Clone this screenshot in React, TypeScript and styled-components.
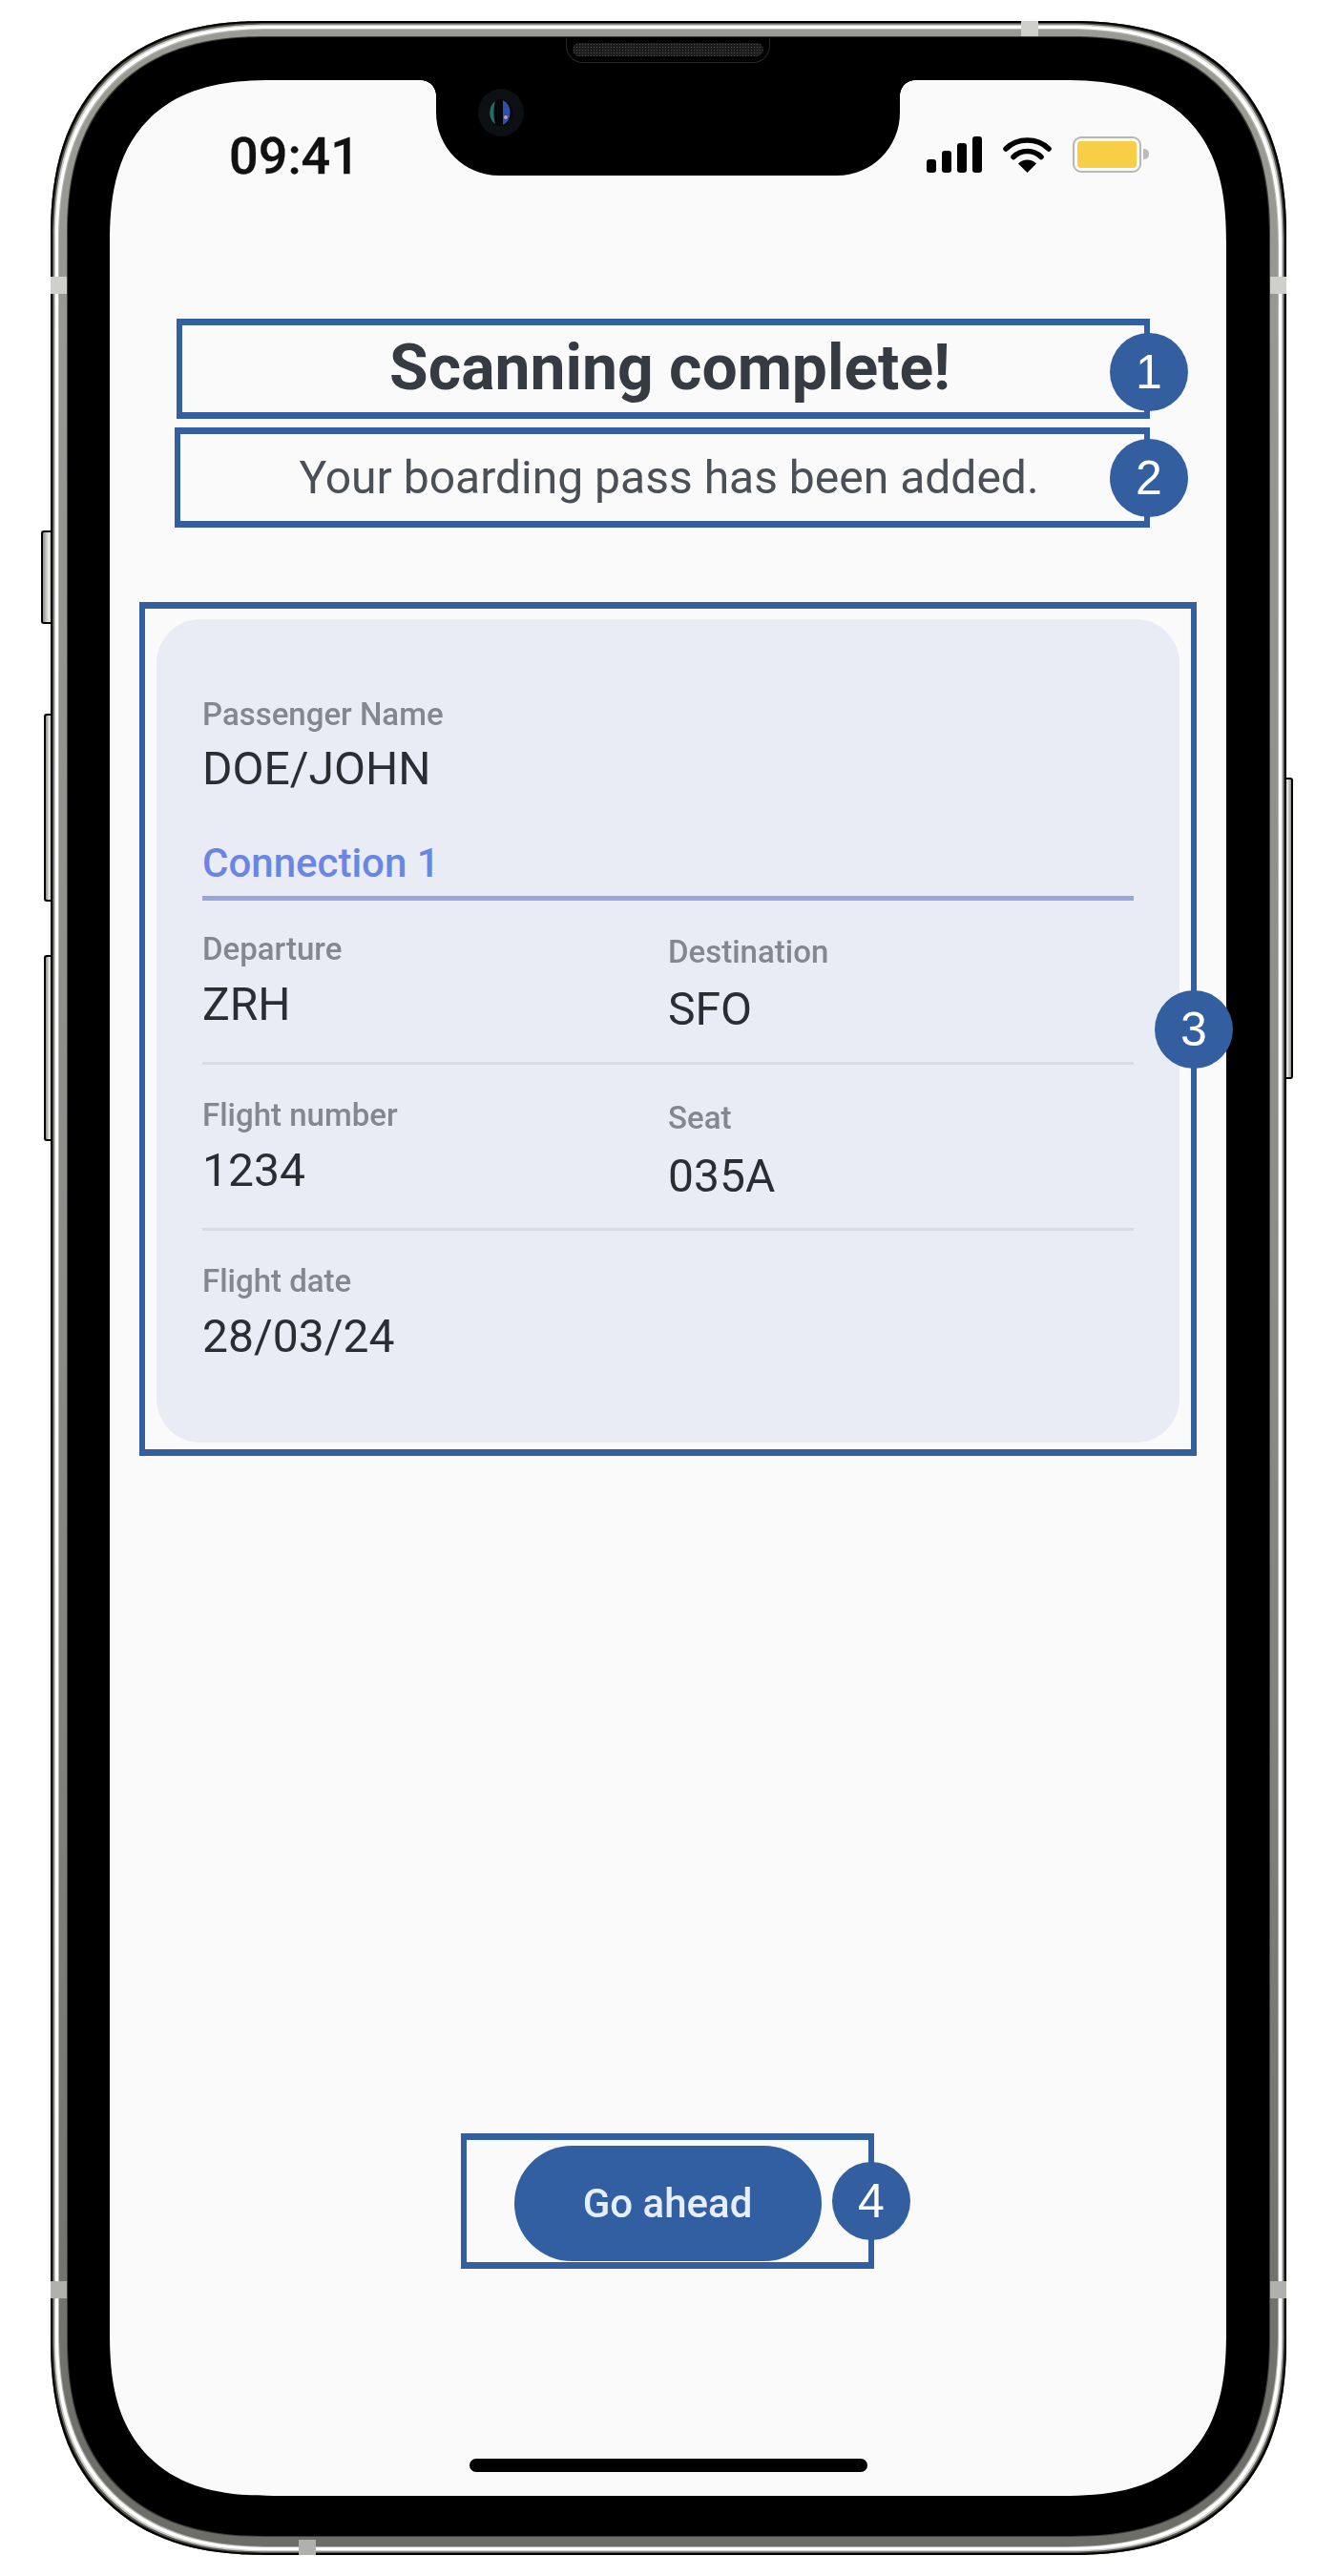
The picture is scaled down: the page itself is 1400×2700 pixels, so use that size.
import React from 'react';
import styled, { createGlobalStyle } from 'styled-components';

const GlobalStyle = createGlobalStyle`
  html, body {
    margin: 0;
    background: #fff;
    font-family: Roboto, "Liberation Sans", sans-serif;
  }
`;

const BLUE = '#335fa1';

const Page = styled.div`
  width: 1400px;
  height: 2700px;
  box-sizing: border-box;
  padding: 22px 0 0 53px;
  overflow: hidden;
`;

const Phone = styled.div`
  position: relative;
  width: 1295px;
  height: 2656px;
`;

const Shell = styled.div`
  position: relative;
  width: 100%;
  height: 100%;
  box-sizing: border-box;
  padding: 17px 18px 20px;
  border-radius: 226px;
  corner-shape: superellipse(1.25);
  background: linear-gradient(180deg, #9a9b93 0%, #8b8c85 50%, #6c6d67 100%);
  box-shadow:
    inset 0 0 0 2px #000,
    inset 0 0 0 3.5px #55554f,
    inset 0 0 0 5px #c9c9c4,
    inset 0 0 0 8px #fff,
    inset 0 0 0 9px #b5b6b0;
`;

const Bezel = styled.div`
  position: relative;
  width: 100%;
  height: 100%;
  box-sizing: border-box;
  padding: 45px 45px 42px 44px;
  border-radius: 208px;
  corner-shape: superellipse(1.25);
  background: #000;
  box-shadow: 0 0 0 1px #3c3c3a;
`;

const SideButton = styled.div<{ $side: 'left' | 'right'; $top: number; $height: number; $width: number }>`
  position: absolute;
  top: ${(p) => p.$top}px;
  ${(p) => (p.$side === 'left' ? `left: ${-p.$width + 1}px;` : `right: ${-p.$width + 1}px;`)}
  width: ${(p) => p.$width}px;
  height: ${(p) => p.$height}px;
  box-sizing: border-box;
  border: 2px solid #000;
  ${(p) => (p.$side === 'left' ? 'border-right: none; border-radius: 3px 0 0 3px;' : 'border-left: none; border-radius: 0 3px 3px 0;')}
  background: linear-gradient(${(p) => (p.$side === 'left' ? '90deg' : '270deg')}, #8f908a 0%, #e4e4e0 60%, #d2d3ce 100%);
`;

const AntennaBand = styled.div<{ $x: number; $y: number; $w: number; $h: number; $dark?: boolean }>`
  position: absolute;
  left: ${(p) => p.$x}px;
  top: ${(p) => p.$y}px;
  width: ${(p) => p.$w}px;
  height: ${(p) => p.$h}px;
  background: ${(p) => (p.$dark ? '#b0b1ac' : '#cfd0cb')};
`;

const Speaker = styled.div`
  position: absolute;
  left: 540px;
  top: 18px;
  width: 214px;
  height: 26px;
  box-sizing: border-box;
  padding: 5px 6px 6px;
  border: 1px solid #26262a;
  border-top: none;
  border-radius: 0 0 18px 18px;
`;

const SpeakerMesh = styled.div`
  height: 100%;
  border-radius: 8px;
  background-color: #1d1d1d;
  background-image: radial-gradient(#4a4a4a 0.8px, transparent 1px);
  background-size: 3px 3px;
`;

const Screen = styled.div`
  position: relative;
  width: 1170px;
  height: 2532px;
  box-sizing: border-box;
  padding-top: 59px;
  border-radius: 172px;
  corner-shape: superellipse(1.35);
  background: #fafafa;
`;

const Notch = styled.div`
  position: absolute;
  left: 342px;
  top: 0;
  width: 486px;
  height: 100px;
  background: #000;
  border-radius: 0 0 66px 66px;

  &::before,
  &::after {
    content: '';
    position: absolute;
    top: 0;
    width: 16px;
    height: 16px;
  }

  &::before {
    left: -16px;
    background: radial-gradient(circle at 0 100%, transparent 15.5px, #000 16px);
  }

  &::after {
    right: -16px;
    background: radial-gradient(circle at 100% 100%, transparent 15.5px, #000 16px);
  }
`;

const CameraIcon = styled.svg`
  position: absolute;
  left: 44px;
  top: 9px;
  width: 48px;
  height: 50px;
`;

const StatusBar = styled.div`
  display: flex;
  align-items: center;
  justify-content: space-between;
  height: 38px;
  padding: 0 89px 0 125px;
  filter: blur(0.7px);
`;

const Time = styled.span`
  font-size: 54px;
  font-weight: 500;
  line-height: 38px;
  color: #111;
  -webkit-text-stroke: 0.3px #111;
  transform: translateY(2px);
`;

const StatusIcons = styled.div`
  display: flex;
  align-items: center;
  gap: 22px;
`;

const SignalBars = styled.div`
  display: flex;
  align-items: flex-end;
  gap: 6px;
  height: 38px;
`;

const SignalBar = styled.div<{ $height: number }>`
  width: 10px;
  height: ${(p) => p.$height}px;
  border-radius: 3px;
  background: #000;
`;

const WifiIcon = styled.svg`
  width: 51px;
  height: 38px;
`;

const Battery = styled.div`
  position: relative;
  width: 72px;
  height: 38px;
  box-sizing: border-box;
  border: 2.5px solid #b8b8b3;
  border-radius: 9px;
  padding: 3px;

  &::after {
    content: '';
    position: absolute;
    right: -10px;
    top: 11px;
    width: 6px;
    height: 11px;
    border-radius: 0 5px 5px 0;
    background: #bcbcb8;
  }
`;

const BatteryLevel = styled.div`
  width: 100%;
  height: 100%;
  border-radius: 4px;
  background: #f7ce46;
`;

const Content = styled.div`
  display: flex;
  flex-direction: column;
  align-items: flex-start;
`;

const Highlight = styled.div<{ $left: number; $top: number; $width: number; $height: number }>`
  position: relative;
  display: flex;
  align-items: center;
  justify-content: center;
  box-sizing: border-box;
  margin: ${(p) => p.$top}px 0 0 ${(p) => p.$left}px;
  width: ${(p) => p.$width}px;
  height: ${(p) => p.$height}px;
  border-style: solid;
  border-color: ${BLUE};
  border-width: 7px 6px;
`;

const Badge = styled.div<{ $right: number; $shift?: number }>`
  position: absolute;
  top: calc(50% - 41px + ${(p) => p.$shift || 0}px);
  right: ${(p) => p.$right}px;
  width: 82px;
  height: 82px;
  border-radius: 50%;
  display: flex;
  align-items: center;
  justify-content: center;
  background: ${BLUE};
  color: #fff;
  font-family: "Liberation Sans", Arial, sans-serif;
  font-size: 50px;
`;

const Title = styled.h1`
  margin: 0 0 3px;
  padding-left: 14px;
  font-size: 66px;
  font-weight: 700;
  color: #363b43;
  filter: blur(0.7px);
`;

const Subtitle = styled.p`
  margin: 0;
  padding-left: 14px;
  font-size: 48px;
  font-weight: 400;
  color: #4b4f56;
  filter: blur(0.7px);
`;

const Card = styled.div`
  align-self: stretch;
  flex: 1;
  margin: 11px 12px 7px;
  box-sizing: border-box;
  padding: 82px 48px 0;
  border-radius: 46px;
  background: #e9ecf5;
`;

const Field = styled.div<{ $offset?: number; $gap?: number }>`
  display: flex;
  flex-direction: column;
  gap: ${(p) => p.$gap || 14}px;
  margin-top: ${(p) => p.$offset || 0}px;
  margin-bottom: ${(p) => -(p.$offset || 0) - ((p.$gap || 14) - 14)}px;
  filter: blur(0.6px);
`;

const Label = styled.span`
  font-size: 33px;
  line-height: 36px;
  font-weight: 500;
  color: #85878f;
`;

const Value = styled.span`
  font-size: 48px;
  line-height: 52px;
  color: #2b2d33;
`;

const PassengerField = styled(Field)`
  gap: 13px;
`;

const ConnectionTitle = styled.div`
  margin-top: 48px;
  padding-bottom: 9px;
  border-bottom: 5px solid #98a5da;
  font-size: 42px;
  line-height: 50px;
  font-weight: 500;
  color: #6b86e2;
`;

const FieldRow = styled.div<{ $last?: boolean }>`
  display: grid;
  grid-template-columns: 488px 1fr;
  padding: 33px 0 34px;
  border-bottom: ${(p) => (p.$last ? 'none' : '3px solid #d8dbe7')};

  & + & {
    padding-top: 35px;
  }
`;

const ButtonSlot = styled.div`
  margin-top: 4px;
`;

const GoButton = styled.button`
  display: block;
  width: 322px;
  height: 121px;
  padding: 0;
  border: none;
  border-radius: 61px;
  background: #325fa2;
  color: #e6eefb;
  font-family: inherit;
  font-size: 42px;
  font-weight: 500;
  filter: blur(0.6px);
`;

const HomeIndicator = styled.div`
  align-self: center;
  width: 417px;
  height: 14px;
  margin-top: 199px;
  border-radius: 7px;
  background: #000;
  filter: blur(0.6px);
`;

export default function App() {
  return (
    <Page>
      <GlobalStyle />
      <Phone>
        <SideButton $side="left" $top={534} $height={98} $width={11} />
        <SideButton $side="left" $top={726} $height={197} $width={8} />
        <SideButton $side="left" $top={979} $height={195} $width={8} />
        <SideButton $side="right" $top={793} $height={316} $width={8} />
        <Shell>
          <AntennaBand $x={0} $y={268} $w={18} $h={18} />
          <AntennaBand $x={1277} $y={268} $w={18} $h={18} />
          <AntennaBand $x={1017} $y={0} $w={18} $h={16} />
          <AntennaBand $x={0} $y={2369} $w={18} $h={18} $dark />
          <AntennaBand $x={1277} $y={2369} $w={18} $h={18} $dark />
          <AntennaBand $x={260} $y={2640} $w={18} $h={16} $dark />
          <Bezel>
            <Screen>
              <Notch>
                <CameraIcon viewBox="0 0 48 50">
                  <ellipse cx="24" cy="25" rx="24" ry="25" fill="#0c1013" />
                  <ellipse cx="24" cy="25" rx="12" ry="14" fill="#05060a" />
                  <path d="M26 12a12 14 0 0 1 0 26z" fill="#2f4fa8" />
                  <path d="M18 13a12 14 0 0 0 0 24c-2-6-2-18 0-24z" fill="#2a6a66" />
                  <circle cx="29" cy="30" r="2" fill="#c79ab8" />
                </CameraIcon>
              </Notch>
              <StatusBar>
                <Time>09:41</Time>
                <StatusIcons>
                  <SignalBars>
                    <SignalBar $height={14} />
                    <SignalBar $height={23} />
                    <SignalBar $height={31} />
                    <SignalBar $height={38} />
                  </SignalBars>
                  <WifiIcon viewBox="0 0 51 38">
                    <path d="M3 13C15 1 36 1 48 13" fill="none" stroke="#000" strokeWidth="5.5" strokeLinecap="round" />
                    <path d="M11 21.5C19 13.5 32 13.5 40 21.5" fill="none" stroke="#000" strokeWidth="5.5" strokeLinecap="round" />
                    <path d="M25.5 38L16 28.5C21 23 30 23 35 28.5Z" fill="#000" />
                  </WifiIcon>
                  <Battery>
                    <BatteryLevel />
                  </Battery>
                </StatusIcons>
              </StatusBar>
              <Content>
                <Highlight $left={70} $top={153} $width={1020} $height={105}>
                  <Title>Scanning complete!</Title>
                  <Badge $right={-46} $shift={3}>1</Badge>
                </Highlight>
                <Highlight $left={68} $top={9} $width={1022} $height={105}>
                  <Subtitle>Your boarding pass has been added.</Subtitle>
                  <Badge $right={-46}>2</Badge>
                </Highlight>
                <Highlight $left={31} $top={78} $width={1108} $height={895}>
                  <Card>
                    <PassengerField>
                      <Label>Passenger Name</Label>
                      <Value>DOE/JOHN</Value>
                    </PassengerField>
                    <ConnectionTitle>Connection 1</ConnectionTitle>
                    <FieldRow>
                      <Field>
                        <Label>Departure</Label>
                        <Value>ZRH</Value>
                      </Field>
                      <Field $offset={3} $gap={16}>
                        <Label>Destination</Label>
                        <Value>SFO</Value>
                      </Field>
                    </FieldRow>
                    <FieldRow>
                      <Field>
                        <Label>Flight number</Label>
                        <Value>1234</Value>
                      </Field>
                      <Field $offset={3} $gap={17}>
                        <Label>Seat</Label>
                        <Value>035A</Value>
                      </Field>
                    </FieldRow>
                    <FieldRow $last>
                      <Field>
                        <Label>Flight date</Label>
                        <Value>28/03/24</Value>
                      </Field>
                    </FieldRow>
                  </Card>
                  <Badge $right={-44}>3</Badge>
                </Highlight>
                <Highlight $left={368} $top={710} $width={433} $height={142}>
                  <ButtonSlot>
                    <GoButton>Go ahead</GoButton>
                  </ButtonSlot>
                  <Badge $right={-44}>4</Badge>
                </Highlight>
                <HomeIndicator />
              </Content>
            </Screen>
          </Bezel>
          <Speaker>
            <SpeakerMesh />
          </Speaker>
        </Shell>
      </Phone>
    </Page>
  );
}
